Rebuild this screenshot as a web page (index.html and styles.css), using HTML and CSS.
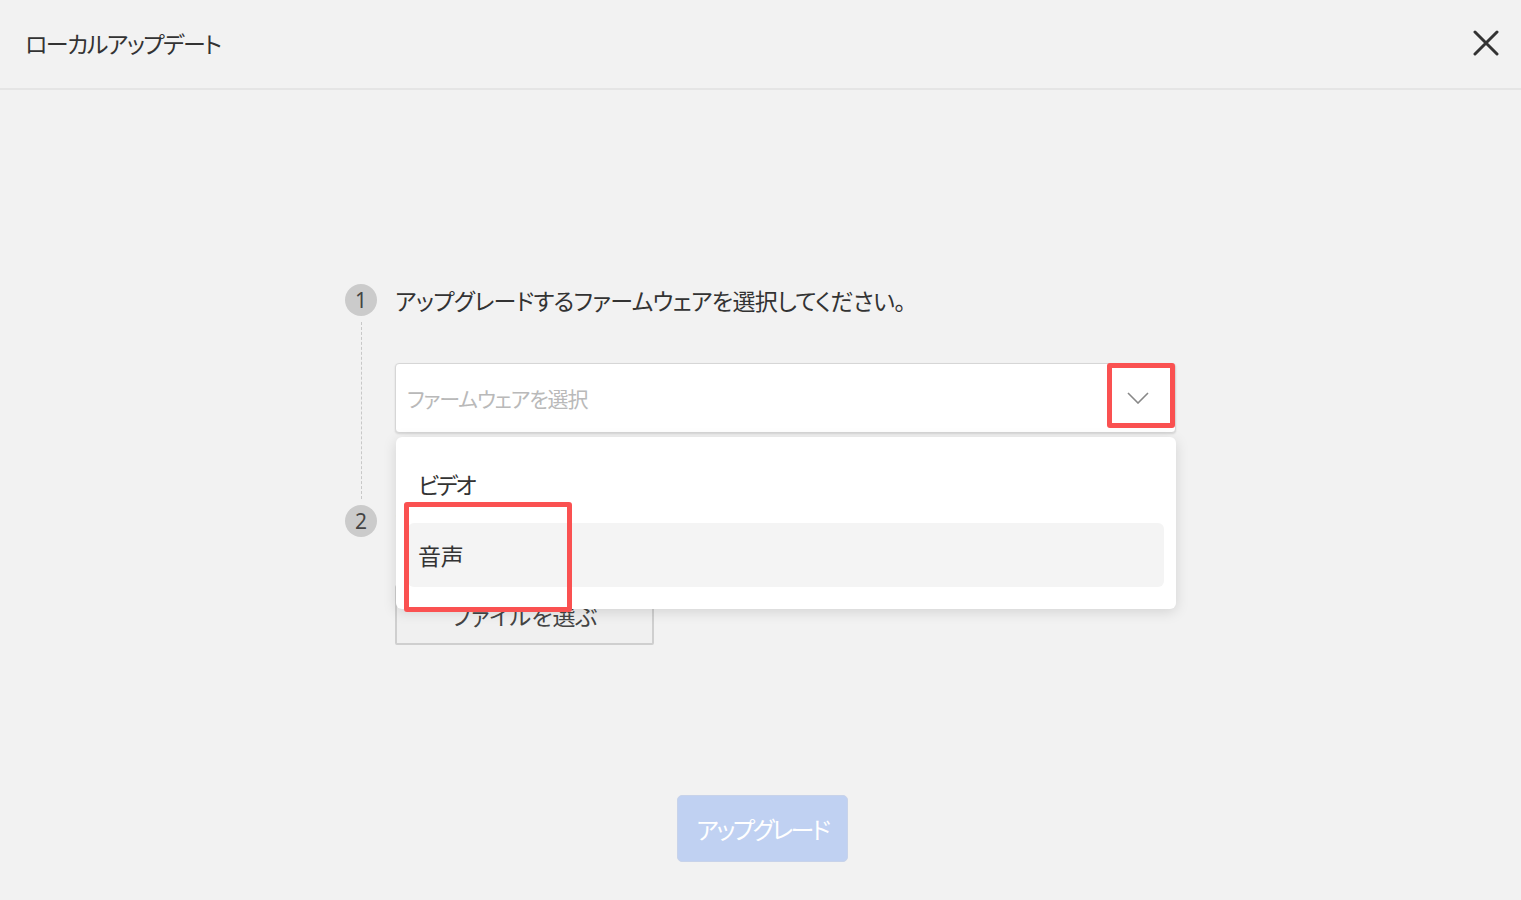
FILE: index.html
```html
<!DOCTYPE html>
<html lang="ja">
<head>
<meta charset="utf-8">
<title>ローカルアップデート</title>
<link rel="stylesheet" href="styles.css">
</head>
<body>
<div class="dialog">
  <header class="header">
    <h1 class="title">ローカルアップデート</h1>
    <button class="close" aria-label="閉じる">
      <svg width="26" height="26" viewBox="0 0 26 26"><path d="M2 2 L24 24 M24 2 L2 24" stroke="#333" stroke-width="3" stroke-linecap="round" fill="none"/></svg>
    </button>
  </header>
  <main class="body">
    <div class="steps">
      <div class="step step-first">
        <div class="step-num-col">
          <div class="step-num">1</div>
          <div class="step-line"></div>
        </div>
        <div class="step-content">
          <div class="step-label">アップグレードするファームウェアを選択してください。</div>
          <div class="select-wrap">
            <div class="select">
              <span class="placeholder">ファームウェアを選択</span>
              <span class="chevron">
                <svg width="22" height="12" viewBox="0 0 22 12"><path d="M1 1 L11 11 L21 1" stroke="#888" stroke-width="1.6" fill="none"/></svg>
              </span>
              <span class="hl hl-chevron"></span>
            </div>
            <div class="dropdown">
              <div class="option option-kana">ビデオ</div>
              <div class="option option-active">音声</div>
              <span class="hl hl-option"></span>
            </div>
          </div>
        </div>
      </div>
      <div class="step">
        <div class="step-num-col">
          <div class="step-num">2</div>
        </div>
        <div class="step-content">
          <div class="step-label">ファームウェアファイルを選択してください。</div>
          <button class="file-btn">ファイルを選ぶ</button>
        </div>
      </div>
    </div>
    <div class="footer">
      <button class="upgrade">アップグレード</button>
    </div>
  </main>
</div>
</body>
</html>
```
FILE: styles.css
```css
* { box-sizing: border-box; }
html, body { margin: 0; padding: 0; }
body {
  background: #f2f2f2;
  font-family: "Noto Sans CJK JP", "Noto Sans", sans-serif;
  font-feature-settings: "palt";
  color: #333;
  width: 1521px;
  height: 900px;
  overflow: hidden;
}
.header {
  height: 90px;
  border-bottom: 2px solid #e5e5e5;
  display: flex;
  align-items: center;
  justify-content: space-between;
  padding: 0 22px 2px 25px;
}
.title {
  margin: 0;
  font-size: 23px;
  font-weight: 400;
  letter-spacing: -1.5px;
  color: #333;
}
.close {
  border: 0;
  background: none;
  padding: 0;
  width: 26px;
  height: 26px;
  display: flex;
  cursor: pointer;
}
.body {
  display: flex;
  flex-direction: column;
  align-items: center;
  padding-top: 194px;
}
.steps {
  width: 831px;
  display: flex;
  flex-direction: column;
}
.step { display: flex; }
.step-num-col {
  width: 50px;
  flex: none;
  display: flex;
  flex-direction: column;
  align-items: flex-start;
}
.step-num {
  width: 32px;
  height: 32px;
  border-radius: 50%;
  background: #cbcbcb;
  color: #444;
  font-family: "Noto Sans", sans-serif;
  font-size: 21px;
  line-height: 32px;
  text-align: center;
}
.step-line {
  flex: 1;
  width: 0;
  margin: 6px 0 6px 16px;
  border-left: 1px dashed #c8c8c8;
}
.step-content {
  flex: 1;
  display: flex;
  flex-direction: column;
  align-items: flex-start;
}
.step-first .step-content { padding-bottom: 72px; }
.step-label {
  font-size: 23px;
  line-height: 32px;
  letter-spacing: -0.6px;
  color: #333;
}
.select-wrap {
  position: relative;
  width: 781px;
  margin-top: 47px;
}
.select {
  position: relative;
  height: 70px;
  background: #fff;
  border: 1px solid #d6d6d6;
  border-radius: 4px;
  box-shadow: 0 1px 2px rgba(0,0,0,0.12);
  display: flex;
  align-items: center;
  justify-content: space-between;
  padding: 0 26px 0 11px;
}
.placeholder {
  font-size: 21px;
  color: #b9b9b9;
  letter-spacing: -1.1px;
}
.chevron { display: flex; padding-top: 0; }
.hl {
  position: absolute;
  border: 5px solid #fa5151;
  border-radius: 3px;
  pointer-events: none;
}
.hl-chevron {
  left: 711px;
  top: -1px;
  width: 68px;
  height: 65px;
}
.dropdown {
  position: absolute;
  left: 1px;
  top: 74px;
  width: 780px;
  height: 172px;
  background: #fff;
  border-radius: 6px;
  box-shadow: 0 3px 14px rgba(0,0,0,0.13);
  padding: 16px 12px 22px;
  display: flex;
  flex-direction: column;
  gap: 6px;
  z-index: 2;
}
.option {
  height: 64px;
  border-radius: 6px;
  padding: 0 10px 2px;
  display: flex;
  align-items: center;
  font-size: 23px;
  color: #333;
  letter-spacing: -0.2px;
}
.option-kana { letter-spacing: -2.6px; }
.option-active { background: #f4f4f4; padding-bottom: 0; }
.hl-option {
  left: 8px;
  top: 65px;
  width: 168px;
  height: 110px;
}
.file-btn {
  margin-top: 48px;
  width: 259px;
  height: 60px;
  background: #f0f0f0;
  border: 2px solid #cfcfcf;
  border-radius: 2px;
  font-family: inherit;
  font-feature-settings: "palt";
  font-size: 23px;
  color: #444;
  padding: 0;
}
.footer {
  margin-top: 150px;
  padding-left: 4px;
  display: flex;
  justify-content: center;
}
.upgrade {
  width: 171px;
  height: 67px;
  background: #c0d1f2;
  border: 1px solid #c8d3ea;
  border-radius: 5px;
  color: #fff;
  font-family: inherit;
  font-feature-settings: "palt";
  font-size: 24px;
  letter-spacing: -2.4px;
  padding: 0;
}
```
